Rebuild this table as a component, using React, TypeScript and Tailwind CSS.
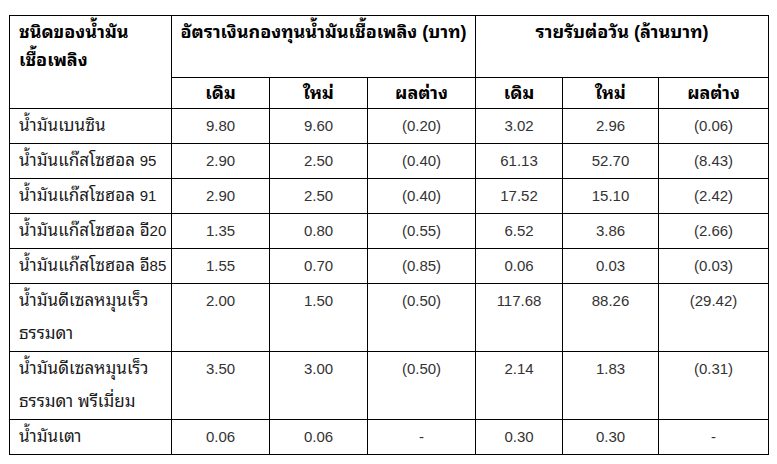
const num = (s: string) => <span className="text-[15px]">{s}</span>;

const rows: { name: React.ReactNode; tall?: boolean; values: string[] }[] = [
    { name: "น้ำมันเบนซิน", values: ["9.80", "9.60", "(0.20)", "3.02", "2.96", "(0.06)"] },
    { name: <>น้ำมันแก๊สโซฮอล {num("95")}</>, values: ["2.90", "2.50", "(0.40)", "61.13", "52.70", "(8.43)"] },
    { name: <>น้ำมันแก๊สโซฮอล {num("91")}</>, values: ["2.90", "2.50", "(0.40)", "17.52", "15.10", "(2.42)"] },
    { name: <>น้ำมันแก๊สโซฮอล อี{num("20")}</>, values: ["1.35", "0.80", "(0.55)", "6.52", "3.86", "(2.66)"] },
    { name: <>น้ำมันแก๊สโซฮอล อี{num("85")}</>, values: ["1.55", "0.70", "(0.85)", "0.06", "0.03", "(0.03)"] },
    {
        name: (
            <>
                น้ำมันดีเซลหมุนเร็ว
                <br />
                ธรรมดา
            </>
        ),
        tall: true,
        values: ["2.00", "1.50", "(0.50)", "117.68", "88.26", "(29.42)"],
    },
    {
        name: (
            <>
                น้ำมันดีเซลหมุนเร็ว
                <br />
                ธรรมดา พรีเมี่ยม
            </>
        ),
        tall: true,
        values: ["3.50", "3.00", "(0.50)", "2.14", "1.83", "(0.31)"],
    },
    { name: "น้ำมันเตา", values: ["0.06", "0.06", "-", "0.30", "0.30", "-"] },
];

const subHeads = ["เดิม", "ใหม่", "ผลต่าง", "เดิม", "ใหม่", "ผลต่าง"];

export default function App() {
    return (
        <div className="min-h-[464px] w-[777px] bg-white pl-[9px] pt-[15px] font-['Liberation_Sans','Noto_Sans_Thai_Looped','Noto_Sans_Thai','Noto_Sans',sans-serif]">
            <table className="w-[759px] table-fixed border-collapse border border-black text-[15px]">
                <colgroup>
                    <col className="w-[162px]" />
                    <col className="w-[98px]" />
                    <col className="w-[98px]" />
                    <col className="w-[108px]" />
                    <col className="w-[87px]" />
                    <col className="w-[96px]" />
                    <col className="w-[110px]" />
                </colgroup>
                <thead>
                    <tr className="h-[62px]">
                        <th
                            rowSpan={2}
                            className="border border-black px-[9px] pt-[2px] text-left align-top text-[18px] font-bold leading-[28px] text-black"
                        >
                            ชนิดของน้ำมัน
                            <br />
                            เชื้อเพลิง
                        </th>
                        <th
                            colSpan={3}
                            className="border border-black pt-[2px] text-center align-top text-[18px] font-bold leading-[28px] text-black"
                        >
                            อัตราเงินกองทุนน้ำมันเชื้อเพลิง (บาท)
                        </th>
                        <th
                            colSpan={3}
                            className="border border-black pt-[2px] text-center align-top text-[18px] font-bold leading-[28px] text-black"
                        >
                            รายรับต่อวัน (ล้านบาท)
                        </th>
                    </tr>
                    <tr className="h-[31px]">
                        {subHeads.map((h, i) => (
                            <th key={i} className="border border-black text-center align-middle text-[18px] font-bold leading-[28px] text-black">
                                {h}
                            </th>
                        ))}
                    </tr>
                </thead>
                <tbody>
                    {rows.map((row, i) => (
                        <tr key={i} className={row.tall ? "h-[68px]" : "h-[35px]"}>
                            <td
                                className={`overflow-hidden whitespace-nowrap border border-black pl-[9px] pr-0 align-top text-[17px] text-[#1a1a1a] ${
                                    row.tall ? "leading-[33px]" : "leading-[34px]"
                                }`}
                            >
                                {row.name}
                            </td>
                            {row.values.map((v, j) => (
                                <td key={j} className="border border-black text-center align-top leading-[33px] text-[#333333]">
                                    {v}
                                </td>
                            ))}
                        </tr>
                    ))}
                </tbody>
            </table>
        </div>
    );
}
